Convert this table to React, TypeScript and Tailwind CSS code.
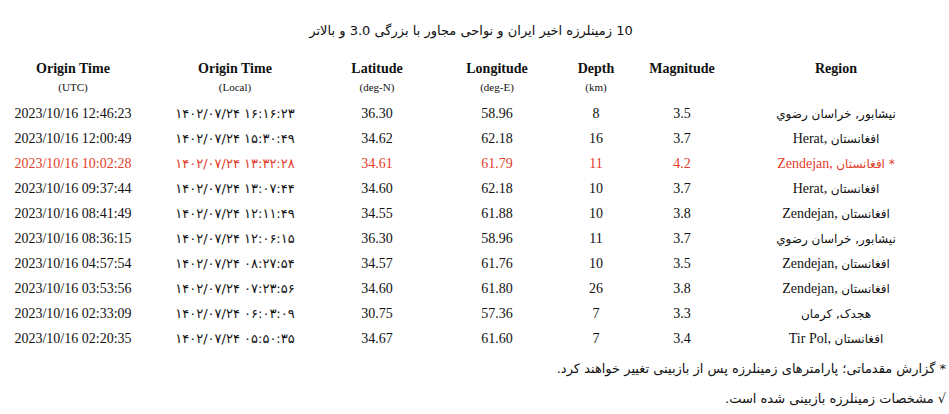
const rows = [
  { utc: '2023/10/16 12:46:23', local: '۱۴۰۲/۰۷/۲۴ ۱۶:۱۶:۲۳', lat: '36.30', lon: '58.96', depth: '8', mag: '3.5', fa: 'نیشابور, خراسان رضوي' },
  { utc: '2023/10/16 12:00:49', local: '۱۴۰۲/۰۷/۲۴ ۱۵:۳۰:۴۹', lat: '34.62', lon: '62.18', depth: '16', mag: '3.7', en: 'Herat', fa: 'افغانستان' },
  { utc: '2023/10/16 10:02:28', local: '۱۴۰۲/۰۷/۲۴ ۱۳:۳۲:۲۸', lat: '34.61', lon: '61.79', depth: '11', mag: '4.2', en: 'Zendejan', fa: 'افغانستان', prelim: true },
  { utc: '2023/10/16 09:37:44', local: '۱۴۰۲/۰۷/۲۴ ۱۳:۰۷:۴۴', lat: '34.60', lon: '62.18', depth: '10', mag: '3.7', en: 'Herat', fa: 'افغانستان' },
  { utc: '2023/10/16 08:41:49', local: '۱۴۰۲/۰۷/۲۴ ۱۲:۱۱:۴۹', lat: '34.55', lon: '61.88', depth: '10', mag: '3.8', en: 'Zendejan', fa: 'افغانستان' },
  { utc: '2023/10/16 08:36:15', local: '۱۴۰۲/۰۷/۲۴ ۱۲:۰۶:۱۵', lat: '36.30', lon: '58.96', depth: '11', mag: '3.7', fa: 'نیشابور, خراسان رضوي' },
  { utc: '2023/10/16 04:57:54', local: '۱۴۰۲/۰۷/۲۴ ۰۸:۲۷:۵۴', lat: '34.57', lon: '61.76', depth: '10', mag: '3.5', en: 'Zendejan', fa: 'افغانستان' },
  { utc: '2023/10/16 03:53:56', local: '۱۴۰۲/۰۷/۲۴ ۰۷:۲۳:۵۶', lat: '34.60', lon: '61.80', depth: '26', mag: '3.8', en: 'Zendejan', fa: 'افغانستان' },
  { utc: '2023/10/16 02:33:09', local: '۱۴۰۲/۰۷/۲۴ ۰۶:۰۳:۰۹', lat: '30.75', lon: '57.36', depth: '7', mag: '3.3', fa: 'هجدک, کرمان' },
  { utc: '2023/10/16 02:20:35', local: '۱۴۰۲/۰۷/۲۴ ۰۵:۵۰:۳۵', lat: '34.67', lon: '61.60', depth: '7', mag: '3.4', en: 'Tir Pol', fa: 'افغانستان' },
]

const heads = [
  ['Origin Time', '(UTC)'],
  ['Origin Time', '(Local)'],
  ['Latitude', '(deg-N)'],
  ['Longitude', '(deg-E)'],
  ['Depth', '(km)'],
  ['Magnitude', ''],
  ['Region', ''],
]

const fa = 'font-["DejaVu_Sans",sans-serif]'

function Cell({ children, className = '' }: { children: React.ReactNode; className?: string }) {
  return (
    <td className="p-0">
      <div className={`h-[25px] flex items-center justify-center whitespace-nowrap ${className}`}>{children}</div>
    </td>
  )
}

function Region({ en, fa: text, prelim }: { en?: string; fa: string; prelim?: boolean }) {
  if (!en) {
    return (
      <span dir="rtl" className={`${fa} text-[12px]`}>
        {text}
      </span>
    )
  }
  return (
    <span>
      {en},{' '}
      <span dir="rtl" className={`${fa} text-[12px]`}>
        {text}
      </span>
      {prelim && <span className={`${fa} text-[12px]`}> *</span>}
    </span>
  )
}

export default function App() {
  return (
    <div className='w-[949px] h-[414px] bg-white text-[#111] font-["Liberation_Serif",serif] text-[14px]'>
      <div dir="rtl" className={`pt-[21px] w-[942px] text-center leading-[20px] text-[13px] ${fa}`}>
        10 زمینلرزه اخیر ایران و نواحی مجاور با بزرگی 3.0 و بالاتر
      </div>
      <table className="mt-[18px] w-[936px] table-fixed border-collapse">
        <colgroup>
          <col className="w-[146px]" />
          <col className="w-[178px]" />
          <col className="w-[106px]" />
          <col className="w-[134px]" />
          <col className="w-[64px]" />
          <col className="w-[108px]" />
          <col className="w-[200px]" />
        </colgroup>
        <thead>
          <tr>
            {heads.map(([t, s], i) => (
              <th key={i} className="p-0 pb-[6px] text-center align-top">
                <div className="font-bold leading-[20px]">{t}</div>
                <div className="font-normal text-[11px] leading-[16px] h-[16px]">{s}</div>
              </th>
            ))}
          </tr>
        </thead>
        <tbody>
          {rows.map((r) => (
            <tr key={r.utc} className={r.prelim ? 'text-[#e23d2b]' : ''}>
              <Cell>{r.utc}</Cell>
              <Cell className={`${fa} text-[13px]`}>{r.local}</Cell>
              <Cell>{r.lat}</Cell>
              <Cell>{r.lon}</Cell>
              <Cell>{r.depth}</Cell>
              <Cell>{r.mag}</Cell>
              <Cell>
                <Region en={r.en} fa={r.fa} prelim={r.prelim} />
              </Cell>
            </tr>
          ))}
        </tbody>
      </table>
      <div className={`mt-[8px] w-[946px] flex flex-col items-end gap-[10px] ${fa} text-[13px] leading-[20px]`}>
        <div className="flex gap-[4px]">
          <span dir="rtl">گزارش مقدماتی؛ پارامترهای زمینلرزه پس از بازبینی تغییر خواهند کرد.</span>
          <span>*</span>
        </div>
        <div className="flex gap-[4px]">
          <span dir="rtl">مشخصات زمینلرزه بازبینی شده است.</span>
          <span>√</span>
        </div>
      </div>
    </div>
  )
}
